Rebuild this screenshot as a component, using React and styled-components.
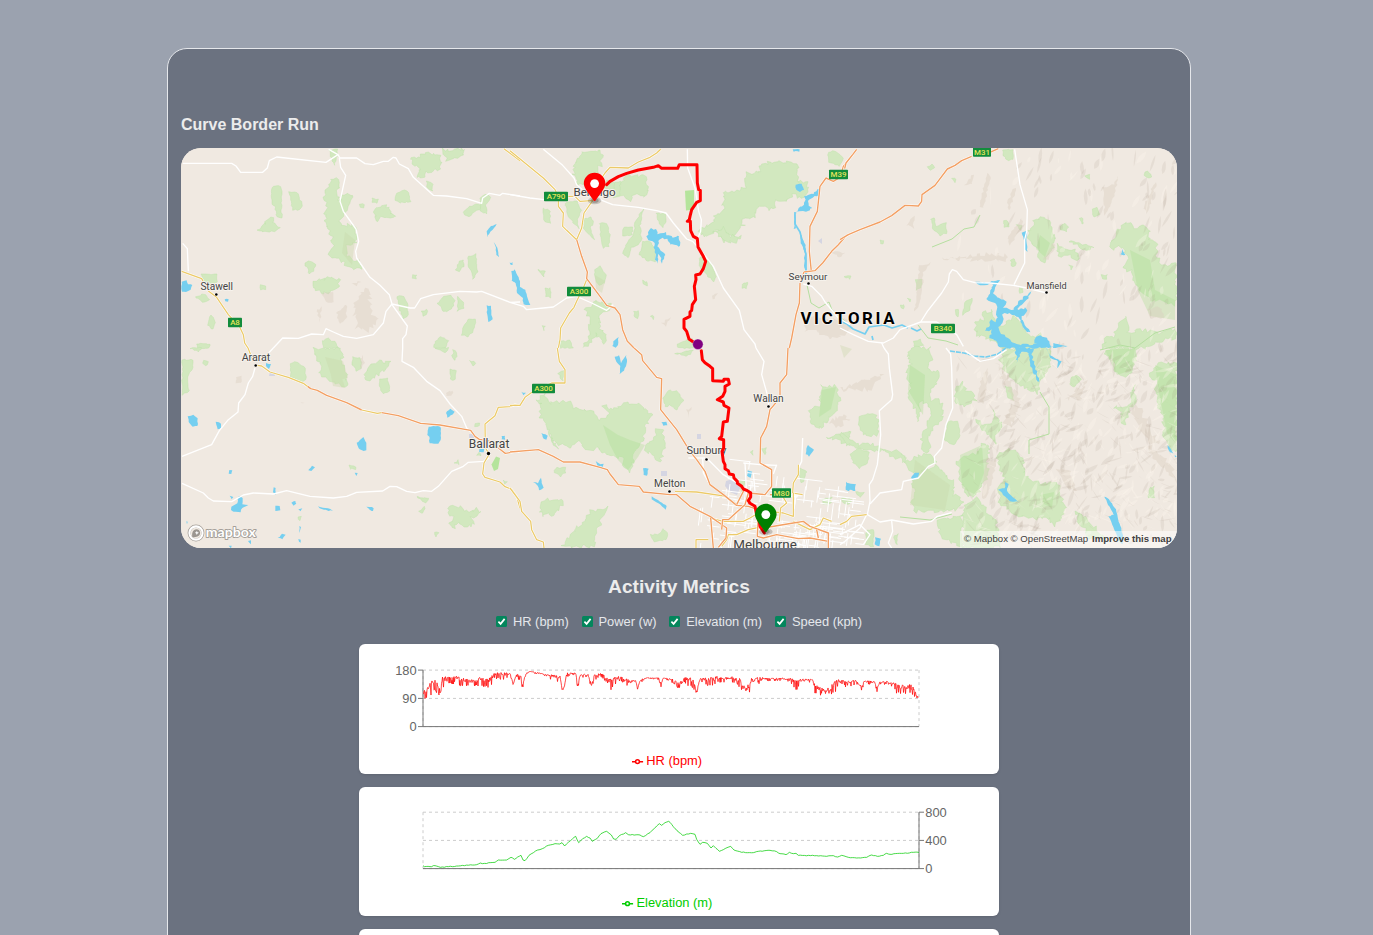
import React from "react";
import styled, { createGlobalStyle } from "styled-components";

const GlobalStyle = createGlobalStyle`
  *, *::before, *::after { box-sizing: border-box; }
  body {
    margin: 0;
    background: #9ca3af;
    color: #e9ebee;
    font-family: "Liberation Sans", Arial, sans-serif;
  }
`;

const Page = styled.div`
  height: 100vh;
  overflow: hidden;
  padding: 48px 15px 0 0;
  background: #9ba2af;
`;
const Panel = styled.main`
  width: 1024px;
  height: 1400px;
  margin: 0 auto;
  padding: 67px 13px 0;
  border: 1px solid #e5e7eb;
  border-radius: 20px;
  background: #6b7280;
`;
const Title = styled.h1`
  margin: 0 0 14px;
  font-size: 16px;
  line-height: 18px;
  font-weight: 700;
  color: #ececec;
`;
const MapFrame = styled.div`
  position: relative;
  height: 400px;
  border-radius: 20px;
  overflow: hidden;
  background: #efe9e1;
  svg { display: block; }
`;
const Attribution = styled.div`
  position: absolute;
  right: 0;
  bottom: 0;
  height: 17px;
  padding: 0 5.5px 2px 4px;
  display: flex;
  gap: 4px;
  align-items: center;
  background: rgba(255, 255, 255, 0.5);
  color: #404040;
  font-size: 9.6px;
  line-height: 15px;
  white-space: pre;
`;
const Heading = styled.h2`
  margin: 28px 0 0;
  text-align: center;
  font-size: 19.2px;
  line-height: 22px;
  font-weight: 700;
  color: #ececec;
`;
const Filters = styled.div`
  display: flex;
  justify-content: center;
  gap: 12.8px;
  margin-top: 15px;
`;
const Filter = styled.label`
  display: flex;
  align-items: center;
  gap: 6px;
  height: 16px;
  font-size: 12.88px;
  color: #e5e7eb;
`;
const Tick = styled.span`
  display: flex;
  width: 11px;
  height: 11px;
  border-radius: 1.5px;
  background: #04865c;
`;
const Charts = styled.section`
  width: 640px;
  margin: 15px auto 0;
  display: flex;
  flex-direction: column;
  gap: 13px;
`;
const ChartCard = styled.article`
  height: ${(p) => p.$height}px;
  border-radius: 6px;
  background: #fff;
  box-shadow: 0 1px 3px rgba(0, 0, 0, 0.12);
  overflow: hidden;
  svg { display: block; }
`;

/* ---------- helpers ---------- */
const random = (seed) => {
  let s = seed;
  return () => {
    s = (s * 1664525 + 1013904223) % 4294967296;
    return s / 4294967296;
  };
};
const parse = (str) => str.trim().split(/\s+/).map((p) => p.split(",").map(Number));

/* Breaks polygon edges into small irregular steps, like a coastline. */
const rough = (str, amount) => {
  const pts = parse(str);
  const xs = pts.map((p) => p[0]);
  const span = Math.max(...xs) - Math.min(...xs);
  const jitter = span > 60 ? amount * 1.7 : amount * 0.7;
  const rnd = random(Math.round(pts[0][0] * 31 + pts[0][1] * 7 + pts.length));
  const out = [];
  pts.forEach(([x, y], i) => {
    const [nx, ny] = pts[(i + 1) % pts.length];
    const steps = Math.max(1, Math.round(Math.hypot(nx - x, ny - y) / 7));
    for (let k = 0; k < steps; k += 1) {
      const t = k / steps;
      out.push([
        Math.round(x + (nx - x) * t + (rnd() - 0.5) * jitter),
        Math.round(y + (ny - y) * t + (rnd() - 0.5) * jitter),
      ]);
    }
  });
  return out.map((p) => p.join(",")).join(" ");
};

/* ---------- map data: six sheets, three units per pixel ---------- */
const sheets = [
  {
    x: 180, y: 148,
    park: [
      "276,115 304,115 304,160 306,208 290,208 286,175 276,172", "326,133 350,133 360,155 368,170 358,186 338,186 332,155",
      "230,250 270,208 280,208 282,224 297,238 280,253", "450,98 465,90 480,110 472,135 480,160 488,138 514,140 512,160 500,188 488,205 478,215 488,235 505,228 528,240 528,285 504,292 500,325 520,335 540,340 540,362 515,360 475,335 450,325 448,310 460,295 450,250 434,220 440,165 432,145",
      "374,345 392,340 408,348 404,362 390,380", "403,402 430,392 478,392 478,412 455,430 430,438 408,428", "583,180 610,170 630,175 632,195 650,205 632,212 605,208 598,215 583,212",
      "650,138 665,127 682,130 692,160 660,165 646,155", "692,25 720,28 738,15 782,18 780,60 740,72 730,90 706,85 720,60 700,45", "785,5 855,3 845,22 800,35",
      "740,98 758,110 756,130 738,118", "848,195 870,175 895,168 905,180 885,192 866,206", "900,150 918,138 930,150 918,172 922,200 902,190",
      "828,365 838,340 850,335 850,355 836,370", "866,325 888,318 888,345 892,370 880,394 872,370 864,350", "652,445 668,442 684,470 682,508 668,510 658,480",
      "770,468 790,445 812,442 824,460 815,485 795,492 782,478", "833,445 850,460 850,482 833,488", "725,490 742,485 740,500 728,505", "846,545 862,515 886,515 880,545 866,565 846,560",
      "65,378 110,380 112,402 90,420 70,395", "45,445 75,438 88,455 70,465", "92,500 105,515 100,545 85,530", "50,588 90,588 88,600 55,600", "425,580 445,572 470,585 474,600 430,600",
      "760,590 780,565 805,580 798,600 762,600", "446,5 474,5 470,30 462,52 455,30", "576,150 596,155 592,164 578,162", "540,168 553,170 550,182 541,178", "242,410 256,412 255,424 242,424", "697,382 710,380 708,392 696,390",
    ],
    relief: ["520,470 540,450 548,424 568,430 572,490 592,510 590,530 560,550 530,540", "470,495 500,470 500,510 480,530", "425,435 462,432 460,460 440,465", "410,490 425,478 420,520", "515,405 542,400 530,412"],
    water: ["5,400 20,397 24,408 38,412 32,425 18,432 5,430", "922,268 920,250 932,235 950,228 938,245 930,250", "942,282 952,300 958,326 950,322 947,300", "1004,364 1010,385 1020,400 1020,430 1010,405 994,398", "920,472 934,474 933,495 938,515 924,522 922,500", "135,453 146,453 143,461 136,460", "990,348 998,342 996,350"],
    minor: ["8,46 155,46 168,54 182,73 248,73 262,60 268,38 290,27 438,43 474,20", "446,4 474,20 480,30 530,30 555,47 580,50 610,40 625,40 640,28 648,30 658,48 685,62 700,88 760,142 800,144 860,152 905,166 908,150 928,136 960,142 968,136 1020,144", "478,30 482,58 497,82 480,160 490,190 528,243 536,280 527,310 530,330 570,388 600,412 628,440 636,468 690,480 704,480 722,452 760,440 840,430 890,432 905,430 990,463 1020,462", "636,468 618,490 610,525 580,560 530,571 490,565 460,552 438,542 430,560 395,558 355,571 308,570 280,600", "636,470 682,534 678,560 668,572 668,600", "8,286 22,302 25,370"],
    yellow: ["5,370 65,392 84,428 110,448 145,500 178,535 190,560 194,585 204,600", "972,2 1020,38"], orange: [],
  },
  {
    x: 180, y: 348,
    park: [
      "6,36 40,36 38,60 25,80 26,130 8,140", "72,38 83,42 78,54 70,48", "30,0 68,0 55,12", "332,45 350,42 378,60 376,95 362,103 332,85", "404,0 470,0 492,20 482,35 490,60 503,85 498,118 475,110 440,90 420,80 425,45 410,30",
      "518,28 540,30 545,60 530,68 515,50", "556,75 575,50 600,38 628,42 612,68 580,90 560,95", "598,92 622,88 630,130 610,138 598,115", "765,0 805,0 795,15 780,8", "820,5 832,20 825,38 816,30", "812,65 830,68 824,98 812,92", "868,38 886,44 878,52",
      "806,480 820,470 835,476 870,490 890,484 898,495 875,510 878,530 860,538 835,520 820,542 812,530 820,510 806,505", "710,445 748,453 738,466 725,458", "718,490 735,475 730,497", "508,353 530,357 525,365 510,362", "824,345 836,337 838,348", "352,505 362,505 358,520", "762,552 775,554 768,566", "885,225 900,224 896,236 886,234", "968,398 982,402 975,408", "895,315 905,322 892,323",
    ],
    relief: ["168,85 185,83 184,108 170,105", "800,132 820,128 815,145 802,145", "545,20 552,45 540,70", "365,162 372,164 368,168"],
    water: ["24,205 40,200 54,212 52,234 38,236 26,222", "108,222 124,226 124,240 114,244", "258,46 274,48 268,62 260,58", "798,195 810,182 824,190 818,200 802,208", "745,235 782,235 782,275 775,287 748,285 748,265 742,262", "530,285 550,267 560,285 558,308 545,308 535,300", "384,368 396,354 404,358 394,370", "524,373 534,374 528,384", "147,366 156,367 154,378 147,376", "154,475 172,465 176,445 188,450 188,468 204,470 186,480 182,492 162,492 154,485", "150,442 160,448 155,455", "280,418 288,420 286,440 278,432", "285,472 300,475 300,488 286,488", "334,464 346,458 350,468 340,474", "354,482 366,482 362,490", "560,475 582,480 580,490 568,486", "414,476 450,482 460,488 445,488 418,480", "294,570 306,557 316,560 308,575", "205,580 214,578 212,590", "357,535 362,538 360,555", "356,572 362,575 361,585 356,582", "897,300 914,302 912,312 898,312", "965,264 976,264 975,275 966,275", "18,520 24,522 22,528", "146,594 154,594 152,600"],
    minor: ["280,0 250,32", "225,60 218,85 205,105 195,140 176,165 174,192 145,215 118,248 95,290 6,325", "6,406 70,435 85,450 100,459 155,461 190,441 220,435 280,438 320,428 390,445 460,450 500,445 530,433 608,429 630,415 650,416 680,430 705,434 730,428 755,430 775,415 815,370 850,355 865,343 910,340 928,330", "668,0 666,40 700,58 740,100 780,128 810,168 845,205 860,240 890,268"],
    yellow: ["204,0 212,20 220,42", "232,52 245,54 270,72 325,88 370,106 385,117", "545,186 592,196 605,194", "1020,173 1005,170 990,176 955,178 945,203 915,228 916,300 928,318 912,345 908,378 915,388 960,402 975,416 995,424 1010,445 1020,480"],
    orange: ["383,115 392,122 412,127 440,142 500,164 545,186", "605,194 655,203 722,226 780,231 872,247 885,265 898,274 925,278 955,300 976,316 1020,309"],
  },
  {
    x: 510, y: 148,
    park: [
      "195,40 220,10 275,10 272,50 262,70 250,95 225,110 200,105 190,80", "285,100 325,110 355,75 380,85 400,82 418,110 405,145 380,140 360,155 335,145 300,140 280,118", "165,165 200,160 215,185 200,215 208,240 190,225 175,205", "220,215 245,208 250,225 240,240 255,275 235,260 222,240", "270,225 290,228 300,260 295,295 280,300 272,260", "340,240 370,235 365,262 340,262", "375,225 400,182 390,235 395,280 365,300 355,330 340,315 350,285 372,262", "315,105 330,100 330,140 310,150", "440,195 468,198 470,220 458,238 445,220",
      "98,180 120,188 122,225 104,220", "255,365 270,355 288,380 285,405 268,410 255,395", "397,282 420,280 440,305 436,340 415,338 388,320",
      "705,75 750,75 745,55 775,45 862,42 862,100 892,100 892,140 870,150 850,138 820,165 800,155 790,185 745,175 735,205 700,210 700,232 670,265 650,258 640,280 625,250 580,265 565,250 590,235 612,225 615,200 640,188 640,135 680,130 710,118", "955,12 975,8 1000,30 990,55 955,42", "570,325 600,340 620,385 610,400 590,380 570,358", "610,250 640,240 655,262 690,262 685,285 650,280",
      "225,480 260,460 300,470 295,490 272,500 270,540 290,560 285,585 255,555 235,600 222,600 240,555 238,510", "85,365 105,370 100,385", "400,398 412,402 410,415 402,412", "696,408 715,402 710,422 698,420", "104,422 122,420 122,448 108,445", "373,490 386,490 384,510 374,508", "420,503 432,505 430,515", "94,532 104,535 100,546", "500,590 545,570 560,600 505,600", "145,580 180,578 190,600 150,600",
    ],
    relief: ["885,520 920,500 960,520 1010,510 1020,550 960,570 920,550 890,545", "960,310 1005,315 990,330", "605,445 625,435 610,455", "455,525 480,510 470,535"],
    water: ["412,260 425,240 440,243 445,258 465,255 490,268 510,262 508,298 480,288 470,270 450,272 445,295 465,320 455,345 448,320 440,348 436,315 432,285 412,275", "5,370 15,365 28,395 30,415 45,425 60,470 42,470 38,450 22,435 18,405 8,398", "0,342 8,350 2,350", "856,110 875,106 882,125 870,132 858,124", "905,140 912,130 932,120 925,140 905,150 892,160 895,175 908,180 885,190 862,192 855,200 865,180 885,165 882,148", "855,195 858,240 852,242", "868,245 876,270 886,290 890,370 882,360 884,310 872,285", "310,580 325,568 325,590 318,600 308,595", "848,3 870,4 868,12 850,10"],
    minor: ["100,4 158,52 192,90 200,110 235,140", "0,140 60,150 102,155", "270,155 308,170 385,178 440,188 468,195 490,225 515,255 530,273 548,280 575,310 610,355 640,420 688,487 702,545 735,588 738,600", "532,4 533,60 555,120 566,190 574,215 572,250 560,280", "0,463 40,475 50,485 100,480 130,477 170,450 200,445 245,465 290,487 310,470", "880,408 905,415 935,445 945,462 985,510 1020,530"],
    yellow: ["0,8 100,90 135,125 145,145 145,175 160,195 158,235 170,247 200,275 215,240 222,195 250,155", "175,145 195,145 210,160 245,158", "255,120 285,75 300,58 355,60 385,42 420,28 440,15 452,4", "232,390 222,415 200,460 192,478 178,495 152,540 150,575 145,600"],
    orange: ["200,275 215,325 232,372 230,392 270,445 290,472 315,480 330,500 338,545 352,580 372,600", "1020,30 1000,55 990,88 970,100 948,90 930,115 922,190 900,235 898,310 904,370", "882,372 915,368 938,345 965,310 985,290 1010,262 1020,258", "882,372 870,405 868,465 858,500 845,570 838,600"],
  },
  {
    x: 510, y: 348,
    park: [
      "78,160 105,135 120,165 180,158 200,182 240,185 270,215 300,195 280,172 310,185 340,165 380,165 410,185 425,205 405,235 395,280 370,320 362,370 345,362 335,330 295,320 260,300 225,305 210,280 180,300 130,280 120,255 140,300 115,250 105,225 92,205 92,165", "435,265 440,242 462,250 458,270 470,285 462,310 448,340 430,330 425,315 405,315 408,290", "460,150 475,128 500,130 520,155 500,185 478,170 465,178", "135,360 165,360 168,375 150,385 132,372", "92,470 110,455 160,455 150,480 125,505 110,495 95,502", "240,490 288,478 275,510 265,545 250,595 155,597 170,580 195,545 220,525", "420,560 450,558 460,540 475,560 470,575 435,580", "145,75 162,68 158,98", "495,15 550,8 530,25", "895,190 930,170 935,115 975,115 990,150 980,190 955,215 930,240 905,220", "950,270 1020,245 1020,290 990,280", "755,300 768,300 765,318", "870,360 890,372 885,390 875,405 868,385", "690,395 705,398 698,430 685,420", "935,455 965,445 965,465 940,470", "720,310 730,308 728,320",
    ],
    relief: ["530,185 545,180 535,208", "950,220 1000,200 1020,210 985,240"],
    water: ["315,25 328,22 332,45 348,22 352,40 342,68 328,80 330,55 318,40", "95,255 112,262 108,275 97,268", "455,222 470,222 472,232 460,232", "258,340 272,350 280,348 278,358 262,355", "400,360 415,362 412,382 402,380", "70,402 85,405 92,390 100,420 88,428 82,412", "425,445 450,460 470,475 468,485 445,465 425,455", "888,302 895,292 912,305 898,325 888,318", "712,368 728,372 722,388 712,384", "1008,402 1020,410 1018,430 1008,425", "33,132 47,134 40,142"],
    minor: ["738,0 762,40 755,80 772,140 776,170", "590,330 640,380 690,410", "578,330 580,375 600,410", "535,330 585,330", "800,350 790,378", "700,345 750,350 800,352", "705,345 710,440", "730,375 735,430", "878,270 875,340 865,360"],
    yellow: ["142,0 148,40 165,65 165,105 125,105 70,130 45,148 30,172 0,172", "0,420 30,460 35,490 62,520 65,545 80,575 100,582 102,600", "865,350 865,380 850,405 848,435 878,440", "495,430 560,432 650,445", "780,490 820,495 850,505 850,435", "600,510 640,520 700,520 720,510 740,498", "558,600 558,575 595,575", "635,595 650,575 655,560 680,560 715,545 760,535", "850,520 880,535 900,545 930,530 940,510 965,520", "815,440 830,465 812,480 808,520"],
    orange: ["372,0 395,20 398,38 440,88 455,92 452,185 468,205 500,245 540,310 560,335 585,370 600,410 640,440 680,472 715,475 760,490", "0,312 85,305 130,325 160,342 210,342 270,358 292,365 300,378 325,410 388,415 400,432 480,440 500,440 540,475 600,505 650,540 648,570 625,598", "834,0 830,80 810,105 810,150 780,185 770,235 752,270 750,345 785,365 785,415 765,440 715,435 705,470 655,515 638,515 635,545", "602,510 610,600", "695,410 700,430 680,470", "745,498 742,565 760,570 800,560 865,572 900,570 955,580", "760,540 850,525 880,520 900,535 955,555 955,600", "920,545 925,570", "815,440 780,440"],
  },
  {
    x: 840, y: 148,
    park: [
      "274,212 285,210 288,235 318,225 320,255 300,262 280,245", "490,5 520,5 520,32 505,38 488,25", "262,58 275,50 282,58 272,66", "335,90 348,92 345,102", "912,80 922,68 935,85 928,90", "735,85 750,80 748,92", "490,220 505,218 508,235 492,238", "530,232 545,235 542,245", "755,185 770,180 778,200 762,205", "718,210 730,212 728,230", "565,245 580,235 580,215 600,208 630,222 635,250 645,275 632,310 618,325 612,340 595,330 598,305 568,280", "648,290 670,300 700,305 715,320 710,335 690,322 660,325 648,310", "660,235 675,225 685,235 680,250 662,245", "690,280 730,290 758,300 740,305 715,298", "848,230 868,222 880,240 908,228 930,250 928,275 950,285 950,320 960,350 1008,350 1008,470 970,460 930,455 900,430 885,400 870,370 850,355 862,330 850,295 810,305 815,280 835,245", "120,275 132,278 130,290 120,288", "228,395 245,392 245,415 230,425", "512,335 525,332 528,352 515,355", "180,472 192,470 190,485", "200,450 210,452 208,460", "12,385 32,385 30,392", "537,420 548,422 548,435 538,434", "368,485 378,460 398,450 390,485 370,500", "782,382 800,380 802,392 788,392", "686,350 700,355 695,364", "405,520 430,515 430,490 460,490 470,530 490,530 520,505 550,525 555,555 580,570 600,560 620,600 490,600 440,570 410,560", "790,600 800,560 820,565 840,520 862,510 862,550 885,555 900,545 960,555 1008,545 1008,570 960,580 920,600", "220,580 240,575 250,592 225,598", "345,485 355,485 352,508",
    ],
    relief: ["375,110 400,80 395,108", "440,75 452,85 430,180 420,180", "500,165 520,125 530,120 508,185", "790,120 820,110 835,85 820,150 795,200", "910,180 940,110 950,105 935,150 920,200", "200,230 222,205 220,240", "240,350 270,345 250,375 245,450 225,490 230,420", "920,485 960,475 975,510 930,510", "440,320 500,320 500,335 300,332", "500,270 545,210 550,235 510,290", "610,335 640,285 645,295 625,335"],
    water: ["545,255 560,248 560,285 563,312 555,305 552,275", "408,402 440,405 460,400 480,396 470,408 420,410", "460,405 470,410 462,438 478,450 498,460 492,480 520,485 540,455 572,432 565,450 545,470 530,485 558,480 560,492 545,505 560,540 572,550 562,555 545,530 535,505 510,498 488,498 490,525 478,540 485,555 530,590 590,590 580,578 600,560 625,575 640,598 480,600 470,580 450,570 455,545 435,550 450,530 452,515 470,520 470,470 440,452 450,435", "640,585 682,594 640,600", "842,320 848,302 855,322"],
    minor: ["524,4 540,110 562,185 560,250 554,275 554,345 522,410", "620,435 560,420 520,412 450,405 405,404 370,395 350,370 337,365 328,378 325,402 305,435 262,490 242,522 180,545 160,570 130,585 85,580 40,560 0,540", "242,522 290,522 350,560 370,595", "125,585 132,600"],
    yellow: [],
    orange: ["0,275 25,260 60,245 120,222 155,203 195,172 235,174 245,160 246,140 285,112 322,63 345,52 365,38 395,25", "475,2 445,15", "50,4 38,20 18,45 14,62"],
  },
  {
    x: 840, y: 348,
    park: [
      "200,20 215,0 270,0 275,35 262,60 280,70 298,70 290,100 275,130 272,160 300,150 312,190 300,225 285,235 268,265 272,300 258,320 245,310 245,270 265,230 275,195 262,165 240,160 238,220 225,185 205,145 212,115 195,70 215,50", "345,165 348,125 365,105 378,125 400,135 408,155 370,175", "55,230 62,205 82,192 112,205 118,245 110,262 70,262", "312,275 325,220 355,222 360,265 340,290", "480,30 510,5 635,0 625,60 600,95 600,125 590,135 560,120 515,90 492,65", "495,115 515,120 520,155 505,150", "790,15 810,0 885,0 885,45 870,80 850,88 830,75 818,35", "940,65 955,45 1008,45 1008,310 985,300 972,265 970,210 955,180 945,130 952,100 930,85", "688,110 695,88 715,82 722,95 700,118",
      "350,340 380,322 410,320 425,290 450,290 440,330 445,380 420,420 400,450 375,440 375,415 360,400 360,360", "405,215 440,235 455,232 462,190 485,230 470,260 465,290 450,260 430,250", "470,320 510,305 540,320 565,395 600,405 655,400 660,440 675,475 660,515 648,532 620,505 590,515 530,505 480,465 475,420 495,390 480,360", "215,400 245,370 290,350 335,400 345,440 370,460 350,485 300,490 220,490 215,460 225,430", "195,345 240,320 270,320 285,345 230,375 210,370", "370,475 410,450 430,470 470,530 480,600 370,600", "295,520 365,500 370,600 300,565", "710,490 735,510 770,545 790,570 750,570 730,540 712,515", "30,320 60,300 88,315 82,345 60,360 40,345", "0,255 15,260 50,290 100,290 140,305 190,315 200,345 170,330 130,310 60,305 25,290 0,265", "820,175 848,175 865,180 875,160 880,110 885,165 865,190 855,230 845,215 845,190", "930,420 942,415 942,450 925,450", "160,570 175,555 170,590", "80,545 100,545 100,595 78,590", "45,432 75,432 60,448", "5,450 35,455 30,468 8,465",
    ],
    relief: ["410,155 425,90 445,60 440,110 430,170", "470,50 500,75 540,160 515,240 490,220 520,170", "670,150 700,140 740,100 720,155", "0,125 100,85 130,80 90,125", "870,170 900,180 960,290 930,290 890,230", "440,330 470,340 440,450 425,450", "650,360 690,370 710,430 680,420", "930,290 1000,360 1000,390 930,320"],
    water: ["525,0 580,0 575,15 582,50 602,103 592,95 570,50 568,15 545,8 532,45", "618,0 630,22 665,40 652,62 655,42 630,28", "475,425 495,420 495,402 505,408 500,430 535,462 510,460 490,440", "792,445 808,455 828,485 836,520 850,560 848,590 838,580 818,530 805,505 822,500", "212,390 225,375 238,375 235,388 222,395", "18,405 48,408 46,428 20,425", "106,568 122,572 118,595 105,590", "982,292 990,300 1000,318 985,308", "1005,320 1009,325 1006,328"],
    minor: ["132,0 145,18 148,60 158,140 155,155 118,188 122,260 112,350 98,395 88,410 90,460 82,500 120,522 155,516 220,528 275,520 292,505 335,494", "318,0 332,18 335,60 338,180 318,230 305,300 283,325 285,345 265,355 235,390 190,400 185,425 120,435 90,468", "375,8 420,40 460,32 500,5", "80,500 60,540 15,580 0,590", "155,518 158,550 145,585 155,600", "0,560 60,530 90,560 70,590"],
    yellow: ["0,530 20,520 35,505 80,500"], orange: [],
  },
];

const routeNorth = "290,110 300,100 325,86 350,76 385,66 430,58 445,53 455,61 503,61 508,50 561,50 562,105 566,125 571,127 571,158 560,163 545,185 540,205 538,215 532,220 541,220 542,248 550,265 562,272 564,297 580,325 587,340 580,362 570,378 557,381 558,395 553,415 557,455 547,470 545,487 540,492 540,505 522,514 522,540 530,550 537,573 550,582";
const routeSouth = "574,8 577,35 585,44 600,55 608,62 608,98 640,100 642,94 655,94 658,108 645,115 645,130 638,145 622,155 640,162 642,172 657,180 652,220 640,222 635,265 628,272 641,275 641,300 636,310 640,340 645,350 645,362 655,368 658,378 670,380 672,390 682,400 682,406 695,415 700,423 712,428 722,434 722,447 715,458 720,466 735,475 740,500 748,520 750,535 763,555";

const Layer = ({ kind, render }) =>
  sheets.map((s) => (
    <g key={`${s.x}-${s.y}`} transform={`translate(${s.x} ${s.y}) scale(${1 / 3})`}>
      {s[kind].map(render)}
    </g>
  ));

const hills = (() => {
  const rnd = random(77);
  const list = [];
  while (list.length < 900) {
    const x = 955 + rnd() * 222;
    const y = 160 + rnd() * 385;
    const density = y > 355 ? (x - 915) / 100 : ((x - 955) / 220) * 0.28 + 0.04;
    if (rnd() < density) {
      const steep = y < 355 || rnd() < 0.35;
      const a = (steep ? -1.25 : rnd() < 0.5 ? -0.6 : 0.7) + (rnd() - 0.5) * 0.9;
      const l = 6 + rnd() * 14;
      const w = 1.2 + rnd() * 3;
      const dx = Math.cos(a) * l;
      const dy = Math.sin(a) * l;
      list.push({
        d: `M${x.toFixed(1)} ${y.toFixed(1)}q${(dx / 2 - w).toFixed(1)} ${(dy / 2 - w / 2).toFixed(1)} ${dx.toFixed(1)} ${dy.toFixed(1)}q${(-dx / 2 + w).toFixed(1)} ${(-dy / 2 + w).toFixed(1)} ${(-dx).toFixed(1)} ${(-dy).toFixed(1)}z`,
        light: rnd() < 0.45,
      });
    }
  }
  return list;
})();

const streets = (() => {
  const rnd = random(12);
  let d = "";
  const areas = [[718, 458, 42, 85, 18], [745, 470, 85, 55, 40], [765, 522, 80, 26, 60], [818, 485, 46, 60, 44], [700, 495, 62, 50, 26]];
  areas.forEach(([x, y, w, h, n]) => {
    for (let i = 0; i < n; i += 1) {
      const sx = x + rnd() * w * 0.85;
      const sy = y + rnd() * h;
      const len = Math.min(6 + rnd() * 20, x + w - sx);
      d += i % 2 ? `M${sx.toFixed(1)} ${sy.toFixed(1)}l${len.toFixed(1)} ${(len * 0.12).toFixed(1)}` : `M${sx.toFixed(1)} ${sy.toFixed(1)}l${(-len * 0.1).toFixed(1)} ${(len * 0.8).toFixed(1)}`;
    }
  });
  return d;
})();

const towns = [
  { name: "Stawell", x: 216.7, y: 290, dot: [216.3, 294.5] },
  { name: "Ararat", x: 256, y: 361, dot: [255.7, 365.5], size: 10.6 },
  { name: "Ballarat", x: 489, y: 448, dot: [488.5, 453.5], size: 12 },
  { name: "Bendigo", x: 594.6, y: 195.8, size: 11.6 },
  { name: "Seymour", x: 808, y: 279.5, dot: [808.5, 283.5], size: 9.9 },
  { name: "Mansfield", x: 1046.5, y: 288.8, dot: [1046.5, 292.5], size: 9.2 },
  { name: "Wallan", x: 768.5, y: 402, dot: [768.5, 406.5] },
  { name: "Sunbury", x: 706.5, y: 454, dot: [706.5, 459.5], size: 11 },
  { name: "Melton", x: 669.7, y: 487, dot: [669.5, 491.5] },
  { name: "Melbourne", x: 765, y: 549, size: 13.4 },
];
const shields = [
  ["A790", 556, 196.5, 24], ["A300", 579, 291.5, 24], ["A300", 543.5, 388.5, 23], ["A8", 235, 322.5, 14],
  ["M39", 838.5, 174.5, 19], ["M31", 982, 152, 18], ["B340", 943, 328.5, 24], ["M80", 781.5, 493, 19],
];

const Pin = ({ x, y, color }) => (
  <g transform={`translate(${x} ${y}) scale(0.8)`}>
    <ellipse cx="13.5" cy="34.8" rx="8.5" ry="4.4" fill="#000" opacity="0.18" />
    <ellipse cx="13.5" cy="34.8" rx="5" ry="2.6" fill="#000" opacity="0.22" />
    <path fill={color} d="M27,13.5C27,19.07 20.25,27 14.75,34.5C14.02,35.5 12.98,35.5 12.25,34.5C6.75,27 0,19.22 0,13.5C0,6.04 6.04,0 13.5,0C20.96,0 27,6.04 27,13.5Z" />
    <circle cx="13.5" cy="13.5" r="5.5" fill="#fff" />
  </g>
);

const RouteMap = () => (
  <svg width="996" height="400" viewBox="181 148 996 400" fontFamily="Roboto, sans-serif">
    <rect x="181" y="148" width="996" height="400" fill="#f0e9e1" />
    <Layer kind="park" render={(p) => <polygon key={p} points={rough(p, 7)} fill="#d2e8bf" stroke="#bfe2ab" strokeWidth="1.4" />} />
    <polygon points="685,190.7 694,190 694,209.5 686,210.5" fill="#b5e49c" />
    <polygon points="491.5,464.5 496,456.5 500,458 498,469 494,471" fill="#b5e49c" />
    <g fill="#a9dc8e" opacity="0.32">
      <path d="M603 425l15 10 12 5 15 5-7 12-10 13-10-10-8-15zM960 455l22-10 2 28-8 22-14-7zM1130 250l20 10 5 30 20 10v20l-25-4-12-25zM1155 365l22 10v70l-10-12-8-40zM1105 350l30-2-3 22-15 5zM1040 495l14-3-2 16-8-4zM910 365l15 10-2 40-15-25zM1040 235l10 8-5 14-9-8zM822 390l14-3-5 22-12 8z" />
    </g>
    <g fill="#c9d6a8" opacity="0.35">
      <path d="M345 232l10 8-3 25-10-12zM330 370l12 8 3 10-12-2zM325 357l18 4 5 17-15 3zM915 460l35 25-5 25-35-5zM840 345l12 4-8 9zM595 275l10 6-3 12-6-4z" />
    </g>
    <Layer kind="relief" render={(p) => <polygon key={p} points={rough(p, 9)} fill="#d9cdbf" opacity="0.4" />} />
    {hills.map((h) => (
      <path key={h.d} d={h.d} fill={h.light ? "#fff8f0" : "#94806b"} opacity={h.light ? 0.3 : 0.11} />
    ))}
    <g fill="#d5d5e2">
      <path d="M270 372h5v4h-6zM469 434h5v4h-5zM726 481l10-3 5 8-4 9-7-3-5-6zM661 471h6v5h-6zM818 241l4-3v6zM697 434h4v5h-4z" />
    </g>
    <g fill="none" stroke="#b5dfa0" strokeWidth="1">
      <path d="M932 247l20-8 12-10 10-2 6-12M807 285l4 18 8 5 10-6 3 8 14 12M1040 392l9 15 0 27-20 6v14M918 325l10 13 18 3 12 4M1100 350l20-5 15 3 20-15 20-6M900 517l30 3 22-6" />
    </g>
    <g fill="none" stroke="#75cff0" strokeLinejoin="round">
      <path d="M840 321l7 3 6 5 12 5 4-7 15-2 8 3 10-3 6 3M911 328l6 3 4-2M872 336l1 4M795 212v12l5 8 3 12 3 10v20" strokeWidth="1.7" />
      <path d="M950 351l14 2 10 3 12 1 12-3 8-6" strokeWidth="1.6" strokeDasharray="5 1" />
    </g>
    <Layer kind="water" render={(p) => <polygon key={p} points={rough(p, 4)} fill="#75cff0" />} />
    <Layer kind="minor" render={(p) => <polyline key={p} points={p} fill="none" stroke="#fff" strokeWidth="4" strokeLinejoin="round" />} />
    <path d={streets} fill="none" stroke="#fff" strokeWidth="1" />
    <Layer kind="yellow" render={(p) => (
      <g key={p} fill="none" strokeLinejoin="round">
        <polyline points={p} stroke="#fff" strokeWidth="7" />
        <polyline points={p} stroke="#ecca68" strokeWidth="3.8" />
      </g>
    )} />
    <Layer kind="orange" render={(p) => (
      <g key={p} fill="none" strokeLinejoin="round">
        <polyline points={p} stroke="#fff" strokeWidth="7" />
        <polyline points={p} stroke="#f3a064" strokeWidth="4.2" />
      </g>
    )} />
    {towns.map((t) => (
      <g key={t.name}>
        {t.dot && <circle cx={t.dot[0]} cy={t.dot[1]} r={t.size > 11.5 ? 1.7 : 1.3} fill="#000" stroke="#fff" strokeWidth="0.8" paintOrder="stroke" />}
        <text x={t.x} y={t.y} textAnchor="middle" fontSize={t.size || 10.1} fill="#444" stroke="#f6f2ec" strokeWidth="2" paintOrder="stroke" strokeLinejoin="round">{t.name}</text>
      </g>
    ))}
    <text x="800.5" y="323.7" fontSize="16.8" fontWeight="700" textLength="94" fill="#000" stroke="#f7f3ee" strokeWidth="2" paintOrder="stroke">VICTORIA</text>
    {shields.map(([label, x, y, w]) => (
      <g key={`${label}-${x}`}>
        <rect x={x - w / 2} y={y - 4.7} width={w} height="9.4" rx="0.8" fill="#128c3c" />
        <text x={x} y={y + 2.8} textAnchor="middle" fontSize="7.9" fontWeight="500" fill="#e5e35c">{label}</text>
      </g>
    ))}
    <g fill="none" stroke="#f00" strokeWidth="9" strokeLinejoin="round" strokeLinecap="round">
      <polyline transform="translate(510 148) scale(0.33333)" points={routeNorth} />
      <polyline transform="translate(510 348) scale(0.33333)" points={routeSouth} />
    </g>
    <circle cx="697.9" cy="344.3" r="5.2" fill="#800080" stroke="#fff" strokeOpacity="0.5" strokeWidth="0.6" />
    <Pin x={583.8} y={172.8} color="#f00" />
    <Pin x={755} y={503.8} color="#008000" />
    <g stroke="#9b9690" strokeOpacity="0.9" strokeLinejoin="round">
      <circle cx="196" cy="533" r="6.9" fill="none" strokeWidth="3" />
      <circle cx="196" cy="533" r="6.6" fill="none" stroke="#fff" strokeWidth="2.1" strokeOpacity="1" />
      <path d="M192.3 537c-.8-3.8.6-7.6 4.2-7.8 2 0 3.6 1.5 3.6 3.6 0 3.6-4 4.9-7.8 4.2z" fill="#9b9690" stroke="none" />
      <path d="M196.8 530.7l.7 1.5 1.5.6-1.5.7-.7 1.5-.6-1.5-1.5-.7 1.5-.6z" fill="#fff" stroke="none" />
      <text x="205.8" y="537" fontFamily="Lato, sans-serif" fontWeight="700" fontSize="13.5" textLength="50" lengthAdjust="spacingAndGlyphs" fill="#fff" strokeWidth="1.8" paintOrder="stroke">mapbox</text>
    </g>
  </svg>
);

/* ---------- charts ---------- */
const hrStart = "204,150,178 216,145,172 228,118,172 240,115,155 252,130,168 262,110,150 275,108,128 290,110,135 305,108,125 320,112,145 340,118,138 360,118,140 375,105,138 390,118,142 405,112,142 418,96,118 430,97,115 445,97,120 465,98,108 475,130,137 482,105,120 490,102,118 498,105,122 502,135,148 508,112,125 515,98,105 525,94,98 545,97,103 560,98,106 580,103,112 600,105,130 615,108,118 621,145,149 628,140,149 635,98,112 650,97,104 662,97,104 668,135,150 675,104,115 690,102,112 700,103,118 710,134,146 717,104,122 735,100,110 745,100,115 758,115,155 765,115,150 775,112,145 785,108,130 800,110,125 812,114,130 820,118,142 835,120,132 843,122,135 848,145,160 853,120,135 858,118,128 870,113,118 890,113,117 910,113,120 914,115,142 918,130,142 925,112,118 945,115,122 960,118,135 975,125,150 990,112,125";
const hrEnd = "50,112,140 60,112,135 70,120,150 80,150,162 85,130,145 90,115,125 100,112,130 115,112,138 130,110,135 145,108,130 160,114,126 180,106,128 195,114,128 208,114,140 218,130,166 228,140,168 238,128,158 245,114,130 260,112,122 272,108,145 285,114,124 310,114,122 330,114,122 350,114,125 365,115,132 380,122,150 390,116,135 410,117,128 428,118,132 435,130,158 445,140,165 460,145,165 480,143,165 490,125,160 500,120,150 510,117,128 525,120,140 545,120,142 560,122,134 574,135,156 582,122,132 600,122,133 615,124,140 622,140,160 630,124,134 650,124,133 670,126,140 680,130,160 695,132,165 710,134,165 722,132,162 732,145,168 740,165,182 746,172,182";
const heartRate = (() => {
  const band = [
    ...parse(hrStart).map(([x, a, b]) => [355 + x / 3, 640 + a / 3, 640 + b / 3]),
    ...parse(hrEnd).map(([x, a, b]) => [670 + x / 3, 640 + a / 3, 640 + b / 3]),
  ];
  const rnd = random(5);
  const pts = [];
  let i = 0;
  for (let x = band[0][0]; x <= band[band.length - 1][0]; x += 0.5) {
    while (i < band.length - 2 && band[i + 1][0] < x) i += 1;
    const [x0, a0, b0] = band[i];
    const [x1, a1, b1] = band[i + 1];
    const t = (x - x0) / (x1 - x0);
    const top = a0 + (a1 - a0) * t;
    const low = b0 + (b1 - b0) * t;
    const share = rnd() < 0.2 ? 0.75 + rnd() * 0.3 : rnd() * 0.5;
    pts.push(`${x.toFixed(2)},${(top + (low - top) * share).toFixed(2)}`);
  }
  return pts.join(" ");
})();

const elevStart = "204,257 208,260 225,260 240,257 256,262 280,260 310,258 365,254 376,249 382,251 420,247 430,240 455,240 468,232 478,238 488,231 498,226 504,240 510,242 522,226 548,210 562,206 580,196 600,191 614,192 621,188 629,198 640,187 652,177 662,169 671,188 683,176 695,169 705,174 712,184 727,175 738,161 755,154 769,165 776,177 783,178 793,167 812,158 820,164 855,165 865,170 885,158 905,138 913,131 920,136 930,128 941,124 952,138 962,152 980,166 990,165";
const elevEnd = "0,127 10,140 25,156 38,166 50,162 62,160 75,163 80,178 90,193 98,187 112,190 123,204 130,197 138,205 148,214 160,209 182,199 192,210 215,217 250,218 265,214 300,211 320,215 330,221 348,224 358,217 370,221 378,220 385,226 440,227 470,229 490,227 503,231 515,226 535,232 560,234 590,232 605,225 622,229 640,226 650,220 660,223 700,220 730,217 746,217";
const elevation = (() => {
  const base = [
    ...parse(elevStart).filter(([x]) => x < 945).map(([x, y]) => [355 + x / 3, 780 + y / 3]),
    ...parse(elevEnd).map(([x, y]) => [670 + x / 3, 780 + y / 3]),
  ];
  const rnd = random(9);
  return base.slice(0, -1).flatMap(([x, y], i) => {
    const [nx, ny] = base[i + 1];
    const steps = Math.max(1, Math.round((nx - x) / 2));
    return Array.from({ length: steps }, (_, k) => {
      const wobble = k ? (rnd() - 0.5) * 0.7 : 0;
      return `${(x + ((nx - x) * k) / steps).toFixed(2)},${(y + ((ny - y) * k) / steps + wobble).toFixed(2)}`;
    });
  }).concat("919,852.4").join(" ");
})();

const MetricChart = ({ top, axisY, ticks, right, color, label, legendX, labelX, labelY, points }) => {
  const axisX = right ? 919 : 423;
  const dir = right ? 1 : -1;
  const legendY = labelY - 4;
  return (
    <svg width="640" height="130" viewBox={`359 ${top} 640 130`} fontSize="12.88" fill="none">
      <g stroke="#ccc" strokeDasharray="3 3">
        {axisY.map((y) => <line key={y} x1="423" x2="919" y1={y} y2={y} />)}
        {[423, 919].map((x) => <line key={x} x1={x} x2={x} y1={axisY[0]} y2={axisY[2]} />)}
      </g>
      <g stroke="#777">
        <line x1="423" x2="919" y1={axisY[2]} y2={axisY[2]} />
        <line x1={axisX} x2={axisX} y1={axisY[0]} y2={axisY[2]} />
        {axisY.map((y) => <line key={y} x1={axisX} x2={axisX + dir * 5} y1={y} y2={y} />)}
      </g>
      <g fill="#666" textAnchor={right ? "start" : "end"}>
        {ticks.map((t, i) => <text key={t} x={axisX + dir * 6.3} y={axisY[i] + 4.7}>{t}</text>)}
      </g>
      <polyline points={points} stroke={color} strokeWidth="0.8" strokeOpacity="0.9" />
      <g stroke={color} strokeWidth="1.5">
        <path d={`M${legendX} ${legendY + 0.5}h3.7m3.7 0h3.7`} />
        <circle cx={legendX + 5.5} cy={legendY + 0.5} r="1.9" />
      </g>
      <text x={labelX} y={labelY} fill={color}>{label}</text>
    </svg>
  );
};

const metrics = ["HR (bpm)", "Power (w)", "Elevation (m)", "Speed (kph)"];

export default function App() {
  return (
    <Page>
      <GlobalStyle />
      <Panel>
        <Title>Curve Border Run</Title>
        <MapFrame>
          <RouteMap />
          <Attribution>
            <span>© Mapbox © OpenStreetMap</span>
            <strong>Improve this map</strong>
          </Attribution>
        </MapFrame>
        <Heading>Activity Metrics</Heading>
        <Filters>
          {metrics.map((m) => (
            <Filter key={m}>
              <Tick>
                <svg width="11" height="11" viewBox="0 0 11 11" fill="none" stroke="#fff" strokeWidth="1.7">
                  <path d="M2.4 5.7l2.2 2.2 4-5" />
                </svg>
              </Tick>
              {m}
            </Filter>
          ))}
        </Filters>
        <Charts>
          <ChartCard $height={130}>
            <MetricChart top={644} axisY={[670.1, 698.4, 726.6]} ticks={["180", "90", "0"]} color="#ff0000"
              label="HR (bpm)" legendX={632} labelX={646.3} labelY={765.2} points={heartRate} />
          </ChartCard>
          <ChartCard $height={129}>
            <MetricChart top={787} axisY={[812.2, 840.4, 868.6]} ticks={["800", "400", "0"]} right color="#00cc00"
              label="Elevation (m)" legendX={622} labelX={636.5} labelY={907.2} points={elevation} />
          </ChartCard>
          <ChartCard $height={129} />
        </Charts>
      </Panel>
    </Page>
  );
}
